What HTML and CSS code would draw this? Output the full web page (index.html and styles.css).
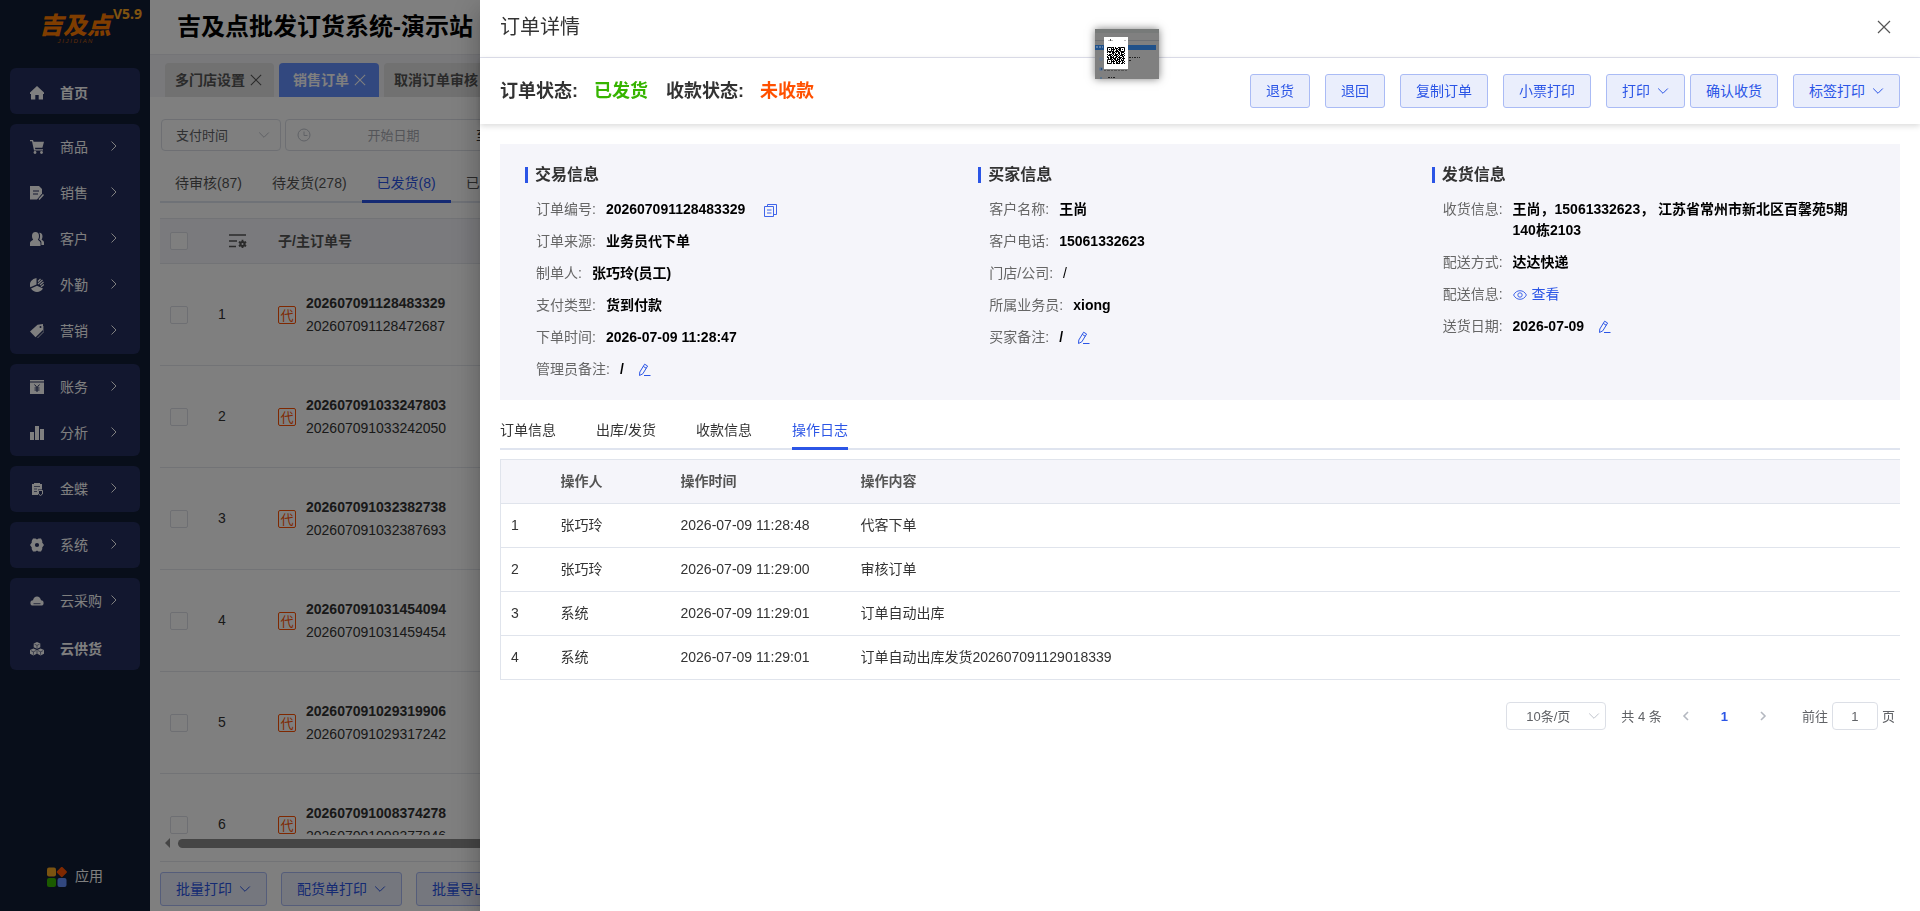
FILE: index.html
```html
<!DOCTYPE html>
<html lang="zh-CN">
<head>
    <meta charset="UTF-8">
    <title>吉及点批发订货系统-演示站</title>
    <link rel="stylesheet" href="styles.css">
</head>
<body>
    <!-- 图标 -->
    <svg class="sprite" xmlns="http://www.w3.org/2000/svg">
        <symbol id="i-right" viewBox="0 0 10 10"><path d="M1.500 .5 6 5 1.500 9.500" fill="none" stroke="currentColor"/></symbol>
        <symbol id="i-down" viewBox="0 0 12 12"><path d="M1.200 3.500 6 8.300l4.800-4.800" fill="none" stroke="currentColor"/></symbol>
        <symbol id="i-close" viewBox="0 0 14 14"><path d="M1 1l12 12M13 1 1 13" fill="none" stroke="currentColor" stroke-width="1.200"/></symbol>
        <symbol id="i-edit" viewBox="0 0 14 14"><path d="M1.800 9 6.600 1.200l3 1.800-4.800 7.800-3.300 1.700zM5.300 3.400l3 1.900M6 12.500h6.500" fill="none" stroke="currentColor"/></symbol>
        <symbol id="i-home" viewBox="0 0 14 14"><path d="M7 0 0 6.500V8h1v5.500h4.300V9h3.400v4.500H13V8h1V6.500z" fill="currentColor"/></symbol>
        <symbol id="i-cart" viewBox="0 0 14 14"><path d="M0 0h3l.6 1.800H14l-1.600 6H5l.3 1.400H13v1.300H4L2 1.300H0z" fill="currentColor"/><circle cx="5" cy="12.500" r="1.400" fill="currentColor"/><circle cx="11.500" cy="12.500" r="1.400" fill="currentColor"/></symbol>
        <symbol id="i-sale" viewBox="0 0 14 14"><path d="M0 0h9l3 3v4.500L7 13.500H0z" fill="currentColor"/><path d="M3 5h6M3 8h5" stroke="#242e5e"/><path d="M13.500 8.500 9 13.500" stroke="currentColor" stroke-width="1.500"/></symbol>
        <symbol id="i-user" viewBox="0 0 14 14"><path d="M5.500 0C3.300 0 2 1.500 2 4c0 1.800.6 3 1.200 3.800C1.500 9 0 9.500 0 11v3h10.500v-3c0-1.500-1.500-2-2.700-3.200C8.500 7 9 5.800 9 4c0-2.500-1.300-4-3.500-4z" fill="currentColor"/><path d="M9.300.7c1.700-.2 3.200 1 3.200 3.500 0 1.500-.5 2.600-1 3.300 1 1 2.500 1.300 2.500 3V13h-2.600v-2.500c0-1.500-1-2-2.200-3C10.200 6 10.500 3 9.300.7z" fill="currentColor"/></symbol>
        <symbol id="i-pie" viewBox="0 0 14 14"><path d="M6.500 0A7 7 0 0 0 .3 9.200L6.500 6.500z" fill="currentColor"/><path d="M1 10.500a7 7 0 0 0 12 0L7 7.700z" fill="currentColor"/><path d="M8 3.500 10.500 1M8 6l4.500-4M10 7l3.500-3M11 8.700 14 6.500" stroke="currentColor" stroke-width="1.200"/></symbol>
        <symbol id="i-tag" viewBox="0 0 14 14"><path d="M0 7.500 7.500.7 13 0v6L5.500 13.300z" fill="currentColor"/><path d="M7.500 14 14 7.500V2" fill="none" stroke="currentColor" stroke-width=".8"/><circle cx="10.500" cy="3" r="1" fill="#242e5e"/></symbol>
        <symbol id="i-bill" viewBox="0 0 14 14"><path d="M0 0h14v1.500H0zM0 2.500h14V14H0z" fill="currentColor"/><path d="M4.500 4.500 7 7.500l2.500-3M7 7.500V12M4.500 8h5M4.500 10h5" fill="none" stroke="#242e5e"/></symbol>
        <symbol id="i-bar" viewBox="0 0 14 14"><path d="M0 6h4v8H0zM5 0h4v14H5zM10 3h4v11h-4z" fill="currentColor"/></symbol>
        <symbol id="i-kd" viewBox="0 0 14 14"><path d="M2 2h2V1h6v1h2v5.500H8V13H2z" fill="currentColor"/><path d="M4 4.500h6M4 7h3M4 9.500h3" stroke="#242e5e" stroke-width=".7"/><path d="M8.500 8.500h4v3.500l-2 1.500-2-1.500z" fill="none" stroke="currentColor"/></symbol>
        <symbol id="i-gear" viewBox="0 0 14 14"><path fill-rule="evenodd" d="M3 .5h2.500L7 1.400 8.500.5H11l1.300 2.500-.1 1.500L14 7l-1.800 2.500.1 1.500L11 13.500H8.500L7 12.600l-1.500.9H3l-1.300-2.500.1-1.500L0 7l1.800-2.500-.1-1.500zM7 4.900a2.100 2.100 0 1 0 0 4.200 2.100 2.100 0 0 0 0-4.200z" fill="currentColor"/></symbol>
        <symbol id="i-cloud" viewBox="0 0 14 14"><path d="M3 11.500a2.600 2.600 0 0 1 0-5.200C3.400 3.800 5 2.500 7 2.500s3.600 1.300 4 3.800a2.600 2.600 0 0 1 0 5.200z" fill="currentColor"/><path d="M3.500 9.700h7" stroke="#242e5e" stroke-width=".8"/></symbol>
        <symbol id="i-cubes" viewBox="0 0 14 14"><path d="M7 0l3.300 1.600v3.600L7 6.800 3.700 5.200V1.600zM3.400 6.400l3.300 1.600v3.800l-3.300 1.700L0 11.800V8zM10.600 6.400 14 8v3.800l-3.400 1.700-3.300-1.700V8z" fill="currentColor"/><path d="M4.500 2.200 7 3.400l2.500-1.200M7 3.400v3M.8 8.600l2.600 1.200L6 8.600M3.400 9.800v3M8 8.600l2.600 1.200 2.600-1.200M10.600 9.800v3" fill="none" stroke="#242e5e" stroke-width=".6"/></symbol>
    </svg>

    <div class="app">
        <!-- 左侧菜单 -->
        <aside class="sidebar">
            <div class="logo">
                <strong class="logo-name">吉及点</strong>
                <span class="logo-sub">J I J I D I A N</span>
                <span class="version">V5.9</span>
            </div>
            <nav class="menu">
                <div class="menu-group">
                    <a href="#" class="menu-item single"><svg><use href="#i-home"/></svg>首页</a>
                </div>
                <div class="menu-group">
                    <a href="#" class="menu-item"><svg><use href="#i-cart"/></svg>商品<svg class="arrow"><use href="#i-right"/></svg></a>
                    <a href="#" class="menu-item"><svg><use href="#i-sale"/></svg>销售<svg class="arrow"><use href="#i-right"/></svg></a>
                    <a href="#" class="menu-item"><svg><use href="#i-user"/></svg>客户<svg class="arrow"><use href="#i-right"/></svg></a>
                    <a href="#" class="menu-item"><svg><use href="#i-pie"/></svg>外勤<svg class="arrow"><use href="#i-right"/></svg></a>
                    <a href="#" class="menu-item"><svg><use href="#i-tag"/></svg>营销<svg class="arrow"><use href="#i-right"/></svg></a>
                </div>
                <div class="menu-group">
                    <a href="#" class="menu-item"><svg><use href="#i-bill"/></svg>账务<svg class="arrow"><use href="#i-right"/></svg></a>
                    <a href="#" class="menu-item"><svg><use href="#i-bar"/></svg>分析<svg class="arrow"><use href="#i-right"/></svg></a>
                </div>
                <div class="menu-group">
                    <a href="#" class="menu-item"><svg><use href="#i-kd"/></svg>金蝶<svg class="arrow"><use href="#i-right"/></svg></a>
                </div>
                <div class="menu-group">
                    <a href="#" class="menu-item"><svg><use href="#i-gear"/></svg>系统<svg class="arrow"><use href="#i-right"/></svg></a>
                </div>
                <div class="menu-group">
                    <a href="#" class="menu-item"><svg><use href="#i-cloud"/></svg>云采购<svg class="arrow"><use href="#i-right"/></svg></a>
                    <a href="#" class="menu-item single"><svg><use href="#i-cubes"/></svg>云供货</a>
                </div>
            </nav>
            <a href="#" class="apps">
                <svg viewBox="0 0 20 20"><rect y=".5" width="9" height="9" rx="2" fill="#f5a623"/><rect x="10.800" y="1" width="8" height="8" rx="1.500" transform="rotate(45 14.800 5)" fill="#ff5000"/><rect y="11" width="9" height="9" rx="2" fill="#36b400"/><rect x="10.500" y="11" width="9" height="9" rx="2" fill="#6590ff"/></svg>
                应用
            </a>
        </aside>

        <!-- 订单列表 -->
        <main class="main">
            <header class="top"><h1>吉及点批发订货系统-演示站</h1></header>
            <div class="page-tabs">
                <button class="page-tab">多门店设置<svg><use href="#i-close"/></svg></button>
                <button class="page-tab active">销售订单<svg><use href="#i-close"/></svg></button>
                <button class="page-tab">取消订单审核<svg><use href="#i-close"/></svg></button>
            </div>
            <div class="filters">
                <div class="select-wrap time-type">
                    <select aria-label="时间类型"><option>支付时间</option></select>
                    <svg><use href="#i-down"/></svg>
                </div>
                <div class="date-range">
                    <svg viewBox="0 0 14 14"><circle cx="7" cy="7" r="6" fill="none" stroke="currentColor"/><path d="M7 3.500V7.500h3.500" fill="none" stroke="currentColor"/></svg>
                    <input type="text" placeholder="开始日期" aria-label="开始日期">
                    <span>至</span>
                    <input type="text" placeholder="结束日期" aria-label="结束日期">
                </div>
            </div>
            <div class="status-tabs">
                <button>待审核(87)</button>
                <button>待发货(278)</button>
                <button class="active">已发货(8)</button>
                <button>已完成</button>
            </div>
            <div class="order-list">
                <table class="orders">
                    <thead>
                        <tr>
                            <th class="col-check"><input type="checkbox" aria-label="全选"></th>
                            <th class="col-no"><svg class="columns" viewBox="0 0 18 14"><path d="M0 1h17M0 7h8M0 12.500h7" stroke="currentColor" stroke-width="1.400"/><circle cx="13.500" cy="10" r="3" fill="currentColor"/><path d="M13.500 5.800v8.400M9.900 7.900l7.200 4.200M9.900 12.100l7.200-4.200" stroke="currentColor" stroke-width="1.800"/><circle cx="13.500" cy="10" r="1" fill="#f5f5fa"/></svg></th>
                            <th>子/主订单号</th>
                        </tr>
                    </thead>
                    <tbody>
                        <tr><td class="col-check"><input type="checkbox" aria-label="选择1"></td><td class="col-no">1</td><td><div class="order-no"><span class="tag">代</span><div><b>202607091128483329</b><br>202607091128472687</div></div></td></tr>
                        <tr><td class="col-check"><input type="checkbox" aria-label="选择2"></td><td class="col-no">2</td><td><div class="order-no"><span class="tag">代</span><div><b>202607091033247803</b><br>202607091033242050</div></div></td></tr>
                        <tr><td class="col-check"><input type="checkbox" aria-label="选择3"></td><td class="col-no">3</td><td><div class="order-no"><span class="tag">代</span><div><b>202607091032382738</b><br>202607091032387693</div></div></td></tr>
                        <tr><td class="col-check"><input type="checkbox" aria-label="选择4"></td><td class="col-no">4</td><td><div class="order-no"><span class="tag">代</span><div><b>202607091031454094</b><br>202607091031459454</div></div></td></tr>
                        <tr><td class="col-check"><input type="checkbox" aria-label="选择5"></td><td class="col-no">5</td><td><div class="order-no"><span class="tag">代</span><div><b>202607091029319906</b><br>202607091029317242</div></div></td></tr>
                        <tr><td class="col-check"><input type="checkbox" aria-label="选择6"></td><td class="col-no">6</td><td><div class="order-no"><span class="tag">代</span><div><b>202607091008374278</b><br>202607091008377846</div></div></td></tr>
                    </tbody>
                </table>
            </div>
            <div class="scrollbar"><i class="scroll-left"></i><i class="scroll-thumb"></i></div>
            <footer class="batch">
                <button class="btn">批量打印<svg><use href="#i-down"/></svg></button>
                <button class="btn">配货单打印<svg><use href="#i-down"/></svg></button>
                <button class="btn">批量导出<svg><use href="#i-down"/></svg></button>
            </footer>
        </main>
    </div>

    <div class="mask"></div>

    <!-- 订单详情抽屉 -->
    <section class="drawer">
        <header class="drawer-header">
            <h2>订单详情</h2>
            <button class="close" aria-label="关闭"><svg><use href="#i-close"/></svg></button>
        </header>
        <div class="drawer-status">
            <p class="status">
                <span>订单状态:</span><span class="green">已发货</span>
                <span>收款状态:</span><span class="orange">未收款</span>
            </p>
            <div class="actions">
                <button class="btn">退货</button>
                <button class="btn">退回</button>
                <button class="btn">复制订单</button>
                <button class="btn">小票打印</button>
                <div class="btn-pair">
                    <button class="btn">打印<svg><use href="#i-down"/></svg></button>
                    <button class="btn">确认收货</button>
                </div>
                <button class="btn">标签打印<svg><use href="#i-down"/></svg></button>
            </div>
        </div>

        <div class="drawer-body">
            <div class="info">
                <div class="info-col">
                    <h3>交易信息</h3>
                    <dl>
                        <div><dt>订单编号:</dt><dd>202607091128483329 <a href="#" class="copy" aria-label="复制"><svg viewBox="0 0 14 14"><path d="M1.500 3.500h9v10h-9zM4.500 3V1.500h9v10H11M4 7h4.500M4 10h4.500" fill="none" stroke="currentColor" stroke-width=".9"/></svg></a></dd></div>
                        <div><dt>订单来源:</dt><dd>业务员代下单</dd></div>
                        <div><dt>制单人:</dt><dd>张巧玲(员工)</dd></div>
                        <div><dt>支付类型:</dt><dd>货到付款</dd></div>
                        <div><dt>下单时间:</dt><dd>2026-07-09 11:28:47</dd></div>
                        <div><dt>管理员备注:</dt><dd>/<a href="#" class="edit" aria-label="编辑"><svg><use href="#i-edit"/></svg></a></dd></div>
                    </dl>
                </div>
                <div class="info-col">
                    <h3>买家信息</h3>
                    <dl>
                        <div><dt>客户名称:</dt><dd>王尚</dd></div>
                        <div><dt>客户电话:</dt><dd>15061332623</dd></div>
                        <div><dt>门店/公司:</dt><dd class="plain">/</dd></div>
                        <div><dt>所属业务员:</dt><dd>xiong</dd></div>
                        <div><dt>买家备注:</dt><dd>/<a href="#" class="edit" aria-label="编辑"><svg><use href="#i-edit"/></svg></a></dd></div>
                    </dl>
                </div>
                <div class="info-col">
                    <h3>发货信息</h3>
                    <dl>
                        <div><dt>收货信息:</dt><dd>王尚，15061332623， 江苏省常州市新北区百馨苑5期140栋2103</dd></div>
                        <div><dt>配送方式:</dt><dd>达达快递</dd></div>
                        <div><dt>配送信息:</dt><dd class="plain"><a href="#" class="view"><svg viewBox="0 0 14 14"><path d="M.6 7C2 4.200 4.300 2.700 7 2.700S12 4.200 13.400 7C12 9.800 9.700 11.300 7 11.300S2 9.800.6 7z" fill="none" stroke="currentColor" stroke-width=".9"/><circle cx="7" cy="7" r="2.200" fill="none" stroke="currentColor" stroke-width=".9"/></svg>查看</a></dd></div>
                        <div><dt>送货日期:</dt><dd>2026-07-09<a href="#" class="edit" aria-label="编辑"><svg><use href="#i-edit"/></svg></a></dd></div>
                    </dl>
                </div>
            </div>

            <div class="detail-tabs">
                <button>订单信息</button>
                <button>出库/发货</button>
                <button>收款信息</button>
                <button class="active">操作日志</button>
            </div>

            <table class="log">
                <thead>
                    <tr><th class="log-no"></th><th class="log-user">操作人</th><th class="log-time">操作时间</th><th>操作内容</th></tr>
                </thead>
                <tbody>
                    <tr><td>1</td><td>张巧玲</td><td>2026-07-09 11:28:48</td><td>代客下单</td></tr>
                    <tr><td>2</td><td>张巧玲</td><td>2026-07-09 11:29:00</td><td>审核订单</td></tr>
                    <tr><td>3</td><td>系统</td><td>2026-07-09 11:29:01</td><td>订单自动出库</td></tr>
                    <tr><td>4</td><td>系统</td><td>2026-07-09 11:29:01</td><td>订单自动出库发货202607091129018339</td></tr>
                </tbody>
            </table>

            <div class="pagination">
                <div class="select-wrap page-size">
                    <select aria-label="每页条数"><option>10条/页</option></select>
                    <svg><use href="#i-down"/></svg>
                </div>
                <span class="total">共 4 条</span>
                <button class="prev" aria-label="上一页"><svg viewBox="0 0 10 10"><path d="M7 1 3 5l4 4" fill="none" stroke="currentColor" stroke-width="1.600"/></svg></button>
                <button class="page-no">1</button>
                <button class="next" aria-label="下一页"><svg viewBox="0 0 10 10"><path d="M3 1l4 4-4 4" fill="none" stroke="currentColor" stroke-width="1.600"/></svg></button>
                <label class="jump">前往<input type="text" value="1">页</label>
            </div>
        </div>
    </section>

    <!-- 拖动中的缩略图 -->
    <svg class="thumb" viewBox="0 0 64 50">
        <rect width="64" height="50" fill="#808080"/>
        <rect width="64" height="4" fill="#777a79"/>
        <path d="M0 11.500h64" stroke="#6d7074"/>
        <rect y="16" width="61" height="5" fill="#20518a"/>
        <path d="M1 18h7" stroke="#9db0c8" stroke-dasharray="2 1"/>
        <circle cx="6" cy="30" r="2" fill="#6f7d90"/><circle cx="6" cy="40" r="2" fill="#5f7590"/><circle cx="6.500" cy="40" r=".7" fill="#103a70"/><circle cx="6" cy="49" r="1" fill="#4f708f"/>
        <path d="M34 28.500h11M34 31.500h2M13 48.500h7" stroke="#222" stroke-dasharray="2 1 1 1"/>
        <path d="M9 41.500h23" stroke="#555" stroke-dasharray="2 1 3 1"/>
        <rect x="9" y="8" width="24" height="32" fill="#fff"/>
        <path d="M13 11.500h5M29 11.500h2" stroke="#bbb"/><path d="M15.500 10v2" stroke="#555"/>
        <g fill="none" stroke="#000">
            <path d="M17 18.500h9M17 24.500h13M12 34.500h1" stroke-dasharray="2 1 1 2"/>
            <path d="M18 19.500h8M12 25.500h18M18 31.500h12" stroke-dasharray="1 1 3 1"/>
            <path d="M17 20.500h8M13 26.500h17M17 32.500h13" stroke-dasharray="3 1 1 1"/>
            <path d="M18 21.500h7M12 27.500h18M18 33.500h11" stroke-dasharray="1 2 2 1"/>
            <path d="M17 22.500h8M12 28.500h17M18 34.500h12" stroke-dasharray="2 1 4 1"/>
            <path d="M12 23.500h18M13 29.500h17M17 30.500h12" stroke-dasharray="1 1 2 1 3 1"/>
            <path d="M12.500 18.500h4v4h-4zM25.500 18.500h4v4h-4zM12.500 30.500h4v4h-4z"/>
            <path d="M14 20.500h1M27 20.500h1M14 32.500h1"/>
        </g>
    </svg>
</body>
</html>
```
FILE: styles.css
```css
* {
    box-sizing: border-box;
}

body {
    margin: 0;
    font-family: "Liberation Sans", "Noto Sans CJK SC", sans-serif;
    font-size: 14px;
    line-height: 21px;
    color: #333;
    background: #fff;
    overflow: hidden;
}

h1, h2, h3, p, dl, dd {
    margin: 0;
}

a {
    color: #2b55e6;
    text-decoration: none;
}

button, input, select {
    font: inherit;
    color: inherit;
}

button {
    margin: 0;
    padding: 0;
    border: none;
    background: none;
    white-space: nowrap;
    cursor: pointer;
}

svg {
    display: block;
    flex: none;
    width: 14px;
    height: 14px;
}

.sprite {
    position: absolute;
    width: 0;
    height: 0;
}

.app {
    display: flex;
    height: 100vh;
}

/* 左侧菜单 */
.sidebar {
    display: flex;
    flex-direction: column;
    flex: none;
    width: 150px;
    padding: 0 10px 24px;
    background: #101c34;
}

.logo {
    position: relative;
    height: 68px;
    padding-top: 14px;
    text-align: center;
    color: #ff7b00;
}

.logo-name {
    display: block;
    font-size: 24px;
    line-height: 24px;
    font-style: italic;
    font-weight: 900;
}

.logo-sub {
    display: block;
    font-size: 6px;
    line-height: 6px;
    font-style: italic;
    opacity: 0.7;
}

.version {
    position: absolute;
    top: 4px;
    right: -2px;
    font-family: "Noto Sans", sans-serif;
    font-weight: bold;
    line-height: 20px;
    color: #ffa820;
}

.menu {
    display: flex;
    flex-direction: column;
    gap: 10px;
}

.menu-group {
    border-radius: 6px;
    background: #242e5e;
}

.menu-item {
    display: flex;
    align-items: center;
    height: 46px;
    padding: 0 20px;
    white-space: nowrap;
    color: #fff;
}

.menu-item.single {
    padding-top: 4px;
    font-weight: bold;
}

.menu-item svg {
    margin-right: 16px;
}

.menu-item .arrow {
    width: 10px;
    height: 10px;
    margin: 0 0 2px auto;
}

.apps {
    display: flex;
    align-items: center;
    justify-content: center;
    gap: 8px;
    margin-top: auto;
    color: #fff;
}

.apps svg {
    width: 20px;
    height: 20px;
}

/* 订单列表 */
.main {
    display: flex;
    flex-direction: column;
    flex: 1;
    min-width: 0;
    overflow: hidden;
}

.top {
    height: 55px;
    padding: 10px 27px;
    border-bottom: 1px solid #e8e8ee;
}

.top h1 {
    font-size: 24px;
    line-height: 34px;
    color: #000;
}

.page-tabs {
    display: flex;
    gap: 5px;
    padding: 8px 15px 0;
    background: #f2f2f7;
}

.page-tab {
    display: flex;
    flex: none;
    align-items: center;
    gap: 5px;
    height: 34px;
    padding: 0 12px 0 10px;
    border-radius: 4px 4px 0 0;
    background: #e2e2e2;
    font-weight: bold;
    color: #555;
}

.page-tab svg {
    width: 12px;
    height: 12px;
}

.page-tab.active {
    padding: 0 13px 0 14px;
    background: #6590ff;
    color: #fff;
}

.filters {
    display: flex;
    gap: 4px;
    padding: 22px 11px 16px;
    font-size: 13px;
}

.select-wrap {
    position: relative;
}

.select-wrap select {
    width: 100%;
    height: 100%;
    border: 1px solid #dcdfe6;
    border-radius: 4px;
    background: #fff;
    color: #606266;
    appearance: none;
}

.select-wrap svg {
    position: absolute;
    top: 50%;
    right: 11px;
    margin-top: -6px;
    width: 12px;
    height: 12px;
    color: #c0c4cc;
    pointer-events: none;
}

.time-type {
    width: 120px;
    height: 32px;
}

.time-type select {
    padding: 0 14px;
}

.date-range {
    display: flex;
    align-items: center;
    width: 350px;
    height: 32px;
    padding: 0 11px;
    border: 1px solid #dcdfe6;
    border-radius: 4px;
}

.date-range svg {
    color: #c0c4cc;
}

.date-range input {
    width: 165px;
    padding: 0;
    border: none;
    text-align: center;
}

.date-range input::placeholder {
    color: #a8abb2;
}

.status-tabs, .detail-tabs {
    display: flex;
    border-bottom: 2px solid #dfe4ef;
}

.status-tabs {
    margin: 0 10px;
}

.status-tabs button {
    height: 36px;
    margin-bottom: -2px;
    padding: 0 15px;
    border-bottom: 3px solid transparent;
    color: #555;
}

.status-tabs button.active, .detail-tabs button.active {
    border-bottom-color: #2b55e6;
    color: #2b55e6;
}

.order-list {
    flex: 1;
    min-height: 0;
    margin: 15px 0 0 10px;
    overflow: hidden;
}

.orders, .log {
    width: 100%;
    border-collapse: collapse;
    table-layout: fixed;
}

.orders th, .orders td {
    padding: 0 0 0 10px;
    border-bottom: 1px solid #e4e7ed;
    text-align: left;
}

.orders th {
    height: 45px;
    border-top: 1px solid #e4e7ed;
    background: #f5f5fa;
    color: #555;
}

.orders td {
    height: 102px;
    line-height: 23px;
}

.orders .col-check {
    width: 48px;
}

.orders .col-no {
    width: 60px;
}

.orders input {
    display: block;
    width: 18px;
    height: 18px;
    margin: 0;
    border: 1px solid #dcdfe6;
    border-radius: 2px;
    background: #fff;
    appearance: none;
}

.columns {
    width: 18px;
    height: 14px;
    margin-left: 11px;
}

.order-no {
    display: flex;
    align-items: center;
    gap: 10px;
}

.tag {
    width: 18px;
    height: 18px;
    border: 1px solid #ff5000;
    border-radius: 2px;
    font-size: 13px;
    line-height: 17px;
    text-align: center;
    color: #ff5000;
}

.scrollbar {
    display: flex;
    align-items: center;
    gap: 8px;
    height: 16px;
    margin-left: 15px;
}

.scroll-left {
    border: 5px solid transparent;
    border-left: none;
    border-right-color: #8b8b8b;
}

.scroll-thumb {
    flex: 1;
    height: 9px;
    border-radius: 5px;
    background: #8b8b8b;
}

.batch {
    display: flex;
    gap: 14px;
    height: 50px;
    margin: 10px 0 0 10px;
    padding-top: 10px;
    border-top: 1px solid #e4e7ed;
}

.btn {
    display: flex;
    align-items: center;
    gap: 7px;
    height: 34px;
    padding: 0 15px;
    border: 1px solid #aabbf5;
    border-radius: 3px;
    background: #eaeefc;
    color: #2b55e6;
}

.btn svg {
    width: 12px;
    height: 12px;
}

.mask {
    position: fixed;
    inset: 0;
    background: rgba(0, 0, 0, 0.5);
}

/* 抽屉 */
.drawer {
    position: fixed;
    top: 0;
    right: 0;
    bottom: 0;
    width: 75%;
    background: #fff;
    box-shadow: 0 8px 10px -5px rgba(0, 0, 0, 0.2), 0 16px 24px 2px rgba(0, 0, 0, 0.14), 0 6px 30px 5px rgba(0, 0, 0, 0.12);
}

.drawer-header {
    display: flex;
    align-items: center;
    justify-content: space-between;
    height: 58px;
    padding: 0 29px 4px 20px;
    border-bottom: 1px solid #e0e2ee;
}

.drawer-header h2 {
    font-size: 20px;
    line-height: 28px;
    font-weight: normal;
}

.close {
    color: #555;
}

.drawer-status {
    display: flex;
    align-items: center;
    justify-content: space-between;
    height: 66px;
    padding: 0 20px;
    box-shadow: 0 2px 6px rgba(0, 0, 0, 0.15);
}

.status {
    display: flex;
    gap: 16px;
    font-size: 18px;
    line-height: 26px;
    font-weight: bold;
}

.green {
    margin-right: 2px;
    color: #36b400;
}

.orange {
    color: #ff5000;
}

.actions {
    display: flex;
    gap: 15px;
}

.btn-pair {
    display: flex;
    gap: 5px;
}

.drawer-body {
    padding: 20px;
}

.info {
    display: grid;
    grid-template-columns: repeat(3, 1fr);
    padding: 20px 20px 9px;
    background: #f5f5fa;
}

.info-col {
    padding: 0 20px 0 5px;
}

.info-col h3 {
    display: flex;
    align-items: center;
    gap: 7px;
    margin-bottom: 14px;
    font-size: 16px;
    line-height: 21px;
}

.info-col h3::before {
    content: "";
    width: 3px;
    height: 16px;
    background: #2b55e6;
}

.info-col dl > div {
    display: flex;
    gap: 10px;
    margin: 0 0 11px 11px;
}

.info-col dt {
    flex: none;
    color: #666;
}

.info-col dd {
    display: flex;
    align-items: center;
    font-weight: bold;
    color: #000;
}

.info-col dd.plain {
    font-weight: normal;
}

.copy {
    margin-left: 18px;
}

.edit {
    margin-left: 14px;
}

.view {
    display: flex;
    align-items: center;
    gap: 5px;
}

.detail-tabs {
    gap: 40px;
    margin-top: 10px;
}

.detail-tabs button {
    height: 40px;
    margin-bottom: -2px;
    padding-top: 3px;
    border-bottom: 3px solid transparent;
}

.log {
    margin-top: 9px;
    border: 1px solid #e0e4ec;
    border-right: none;
}

.log th, .log td {
    height: 44px;
    padding: 0 10px;
    border-bottom: 1px solid #e0e4ec;
    text-align: left;
}

.log th {
    background: #f5f5fa;
    color: #555;
}

.log-no {
    width: 50px;
}

.log-user {
    width: 120px;
}

.log-time {
    width: 180px;
}

.pagination {
    display: flex;
    align-items: center;
    justify-content: flex-end;
    margin-top: 22px;
    padding-right: 5px;
    font-size: 13px;
    color: #606266;
}

.page-size {
    width: 100px;
    height: 28px;
}

.page-size select {
    padding: 0 19px;
}

.page-size svg {
    right: 6px;
}

.total {
    margin-left: 15px;
}

.prev, .next {
    color: #b4b8c0;
}

.prev {
    margin: 0 24px 0 19px;
}

.next {
    margin: 0 34px 0 24px;
}

.prev svg, .next svg {
    width: 10px;
    height: 10px;
}

.page-no {
    padding: 0 6px;
    font-weight: bold;
    color: #2b55e6;
}

.jump {
    display: flex;
    align-items: center;
    gap: 4px;
}

.jump input {
    width: 46px;
    height: 28px;
    padding: 0;
    border: 1px solid #dcdfe6;
    border-radius: 4px;
    text-align: center;
}

/* 缩略图浮在抽屉之上 */
.thumb {
    position: fixed;
    top: 29px;
    right: 761px;
    width: 64px;
    height: 50px;
    box-shadow: 0 0 8px rgba(0, 0, 0, 0.5);
}
```
